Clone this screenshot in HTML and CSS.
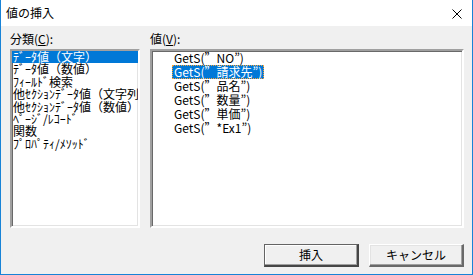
FILE: index.html
```html
<!DOCTYPE html>
<html lang="ja">
<head>
  <meta charset="UTF-8">
  <title>値の挿入</title>
  <link rel="stylesheet" href="styles.css">
</head>
<body>
  <div class="window">
    <div class="titlebar">
      <span class="title">値の挿入</span>
      <svg class="close" width="10" height="10" viewBox="0 0 10 10">
        <path d="M0.5 0.5L9.5 9.5M9.5 0.5L0.5 9.5" stroke="#000" stroke-width="1" fill="none"/>
      </svg>
    </div>

    <div class="body">
      <div class="panes">
        <div class="pane pane-category">
          <div class="label">分類(<u>C</u>):</div>
          <ul class="listbox category-list">
            <li class="selected">ﾃﾞｰﾀ値（文字）</li>
            <li>ﾃﾞｰﾀ値（数値）</li>
            <li>ﾌｨｰﾙﾄﾞ検索</li>
            <li>他ｾｸｼｮﾝﾃﾞｰﾀ値（文字列）</li>
            <li>他ｾｸｼｮﾝﾃﾞｰﾀ値（数値）</li>
            <li>ﾍﾟｰｼﾞ/ﾚｺｰﾄﾞ</li>
            <li>関数</li>
            <li>ﾌﾟﾛﾊﾟﾃｨ/ﾒｿｯﾄﾞ</li>
          </ul>
        </div>

        <div class="pane pane-value">
          <div class="label">値(<u>V</u>):</div>
          <ul class="listbox value-list">
            <li><span>GetS(<q>”</q>NO”)</span></li>
            <li class="selected"><span>GetS(<q>”</q>請求先”)</span></li>
            <li><span>GetS(<q>”</q>品名”)</span></li>
            <li><span>GetS(<q>”</q>数量”)</span></li>
            <li><span>GetS(<q>”</q>単価”)</span></li>
            <li><span>GetS(<q>”</q>*Ex1”)</span></li>
          </ul>
        </div>
      </div>

      <div class="buttons">
        <button class="btn btn-default">挿入</button>
        <button class="btn">キャンセル</button>
      </div>
    </div>
  </div>
</body>
</html>
```

FILE: styles.css
```css
body {
  margin: 0;
  font-family: "Noto Sans CJK JP", "Noto Sans", sans-serif;
  font-size: 12px;
  color: #000;
}

.window {
  width: 473px;
  height: 275px;
  box-sizing: border-box;
  border: 1px solid #1883d7;
  border-top: none;
  background: #f0f0f0;
  display: flex;
  flex-direction: column;
}

.titlebar {
  height: 26px;
  flex: none;
  background: #fff;
  display: flex;
  align-items: center;
  justify-content: space-between;
  padding: 0 10px 0 5px;
}

.title {
  font-size: 12px;
  line-height: 14px;
}

.close {
  display: block;
  margin-top: 1px;
}

.body {
  flex: 1;
  display: flex;
  flex-direction: column;
  padding: 6px 8px 7px 9px;
}

.panes {
  display: flex;
  gap: 10px;
}

.pane {
  display: flex;
  flex-direction: column;
}

.pane-category {
  width: 130px;
}

.pane-value {
  flex: 1;
}

.label {
  line-height: 14px;
  height: 14px;
  margin-bottom: 3px;
}

.label u {
  text-decoration-thickness: 1px;
  text-underline-offset: 1px;
}

.listbox {
  list-style: none;
  margin: 0;
  padding: 0;
  height: 179px;
  box-sizing: border-box;
  background: #fff;
  border-style: solid;
  border-width: 2px;
  border-color: #a0a0a0 #fff #fff #a0a0a0;
  box-shadow: inset 1px 1px 0 #696969, inset -1px -1px 0 #e3e3e3;
  overflow: hidden;
}

.category-list li {
  height: 12.4px;
  line-height: 12.4px;
  padding-left: 1px;
  white-space: nowrap;
}

.category-list li.selected {
  background: #0078d7;
  color: #fff;
}

.value-list {
  padding-left: 20px;
}

.value-list li {
  height: 14px;
  line-height: 14px;
  white-space: nowrap;
}

.value-list li span {
  display: inline-block;
  padding: 0 1px;
  border: 1px solid transparent;
  line-height: 12px;
}

.value-list q {
  quotes: none;
  font-feature-settings: "fwid";
}

.value-list li.selected span {
  background: #0078d7;
  color: #fff;
  border: 1px dotted #f7a43a;
}

.buttons {
  display: flex;
  justify-content: flex-end;
  gap: 10px;
  margin-top: 16px;
}

.btn {
  width: 95px;
  height: 23px;
  padding: 0;
  font-family: inherit;
  font-size: 12px;
  line-height: 14px;
  color: #000;
  background: #f0f0f0;
  border-style: solid;
  border-width: 1px 2px 2px 1px;
  border-color: #fff #696969 #696969 #fff;
  box-shadow: inset -1px -1px 0 #a0a0a0, inset 1px 1px 0 #e3e3e3;
}

.btn-default {
  border-width: 1px 2px 2px 1px;
  border-color: #646464 #464646 #464646 #646464;
  box-shadow: inset -1px -1px 0 #a0a0a0, inset 1px 1px 0 #fff;
}
```
